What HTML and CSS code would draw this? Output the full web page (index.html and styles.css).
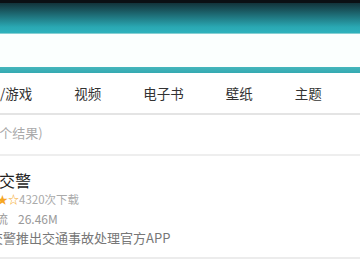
FILE: index.html
```html
<!DOCTYPE html>
<html lang="zh">
<head>
  <meta charset="UTF-8" />
  <title>搜索结果</title>
  <link rel="stylesheet" href="styles.css">
</head>
<body>
  <div class="status"></div>
  <div class="titlebar"></div>
  <div class="search"></div>
  <div class="accent"></div>

  <div class="tabs">
    <div class="tab">软件/游戏</div>
    <div class="tab">视频</div>
    <div class="tab">电子书</div>
    <div class="tab">壁纸</div>
    <div class="tab">主题</div>
  </div>

  <div class="count">共找到1个结果)</div>

  <div class="item">
    <div class="item-title">北京交警</div>
    <div class="item-meta"><span class="stars">★★★☆</span>4320次下载</div>
    <div class="item-size"><span class="cat">交通物流</span>26.46M</div>
    <div class="item-desc">北京交警推出交通事故处理官方APP</div>
  </div>
</body>
</html>
```

FILE: styles.css
```css
body {
  margin: 0;
  padding: 0;
  width: 360px;
  height: 270px;
  overflow: hidden;
  background: #fff;
  font-family: "Noto Sans CJK SC", "Noto Sans", sans-serif;
  color: #222;
}
.status {
  height: 3px;
  background: #0b1014;
}
.titlebar {
  height: 30px;
  background: linear-gradient(#12333a, #2aa8b3 80%, #2fb2bc);
  border-bottom: 1px solid #86cfd2;
}
.search {
  height: 33px;
  background: #fbfffe;
}
.accent {
  height: 6px;
  background: linear-gradient(#45b6bc, #34a9b1);
}
.tabs {
  display: flex;
  align-items: center;
  gap: 42px;
  height: 40px;
  margin-left: -27px;
  border-bottom: 2px solid #e4e4e4;
  font-size: 13.5px;
  color: #333;
  white-space: nowrap;
}
.count {
  height: 39px;
  line-height: 36px;
  margin-left: -47px;
  border-bottom: 2px solid #eeeeee;
  font-size: 13px;
  color: #aaa;
  white-space: nowrap;
}
.item {
  height: 103px;
  margin-left: -33px;
  padding-top: 14px;
  box-sizing: border-box;
  border-bottom: 2px solid #ececec;
  white-space: nowrap;
}
.item-title {
  font-size: 16px;
  line-height: 20px;
  color: #222;
}
.item-meta {
  margin-left: 8px;
  font-size: 11.5px;
  line-height: 19px;
  color: #aaa;
}
.stars {
  color: #f5a623;
  font-size: 11px;
}
.item-size {
  margin-left: -7px;
  font-size: 12px;
  line-height: 19px;
  color: #999;
}
.cat {
  margin-right: 10px;
}
.item-desc {
  margin-left: -3px;
  font-size: 13px;
  line-height: 19px;
  color: #777;
}
```
